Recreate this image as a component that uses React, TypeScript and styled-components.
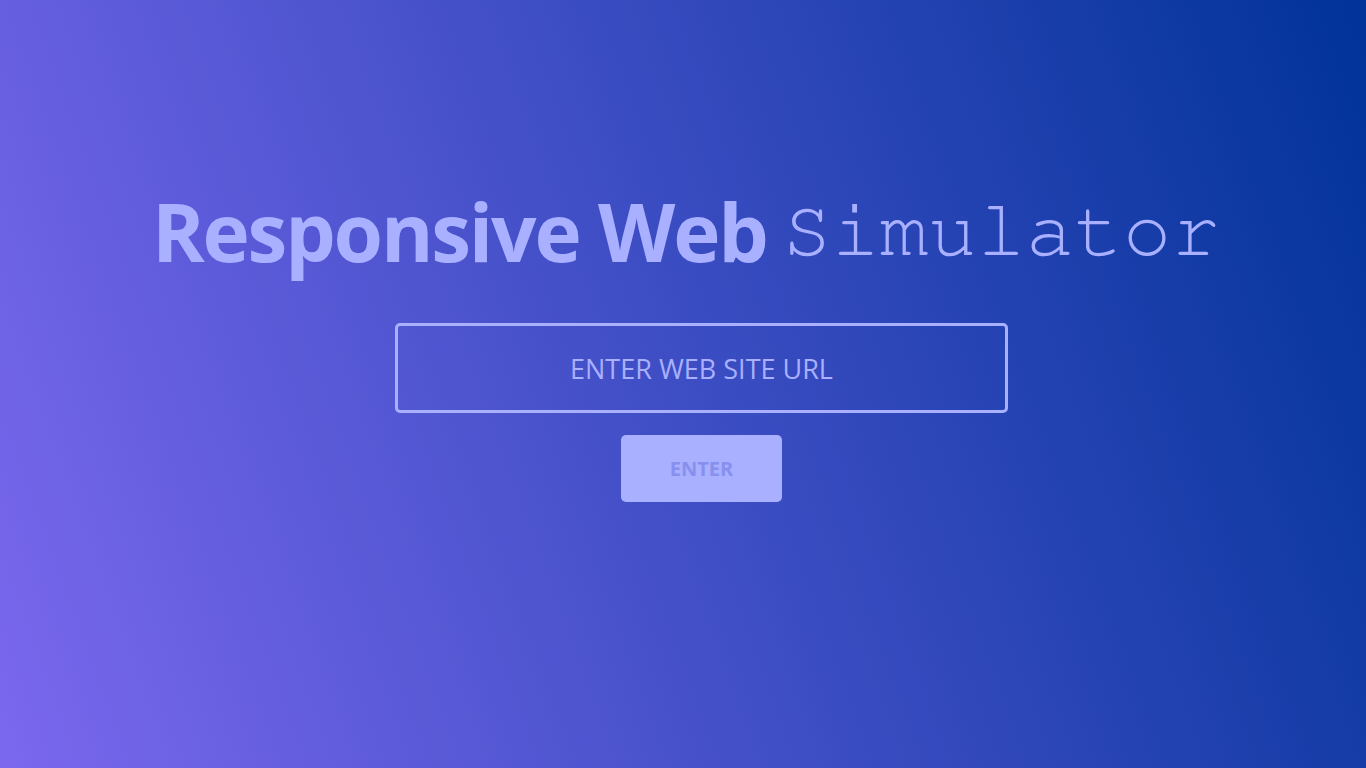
import React, { useState } from "react";
import styled, { createGlobalStyle } from "styled-components";

const GlobalStyle = createGlobalStyle`
  html, body {
    margin: 0;
    padding: 0;
  }
  body {
    font-family: "Open Sans", "Noto Sans", sans-serif;
  }
`;

const Page = styled.div`
  width: 100vw;
  height: 100vh;
  background: linear-gradient(70deg, #7b68ee 0%, #003399 100%);
  display: flex;
  flex-direction: column;
  align-items: center;
  padding-top: 181px;
  box-sizing: border-box;
`;

const Title = styled.h1`
  margin: 0;
  display: flex;
  align-items: center;
  gap: 16px;
  color: #a8b0ff;
  height: 100px;
  padding-left: 6px;
`;

const Bold = styled.span`
  font-family: "Open Sans", "Noto Sans", sans-serif;
  font-size: 80px;
  line-height: 100px;
  font-weight: 700;
  letter-spacing: -2.2px;
`;

const Mono = styled.span`
  font-family: "Nimbus Mono PS", "Nimbus Mono L", "FreeMono", Courier,
    "Courier New", "Liberation Mono", monospace;
  font-size: 81px;
  line-height: 100px;
  font-weight: 400;
`;

const Form = styled.form`
  display: flex;
  flex-direction: column;
  align-items: center;
  gap: 22px;
  margin-top: 42px;
  padding-left: 37px;
`;

const UrlInput = styled.input`
  width: 613px;
  height: 90px;
  box-sizing: border-box;
  border: 3px solid #a8b0ff;
  border-radius: 5px;
  background: transparent;
  color: #a8b0ff;
  text-align: center;
  font-family: "Open Sans", "Noto Sans", sans-serif;
  font-size: 27px;
  outline: none;

  &::placeholder {
    color: #a8b0ff;
    opacity: 1;
  }
`;

const EnterButton = styled.button`
  width: 161px;
  height: 67px;
  border: none;
  border-radius: 5px;
  background: #a8b0ff;
  color: #8790ee;
  font-family: "Open Sans", "Noto Sans", sans-serif;
  font-weight: 700;
  font-size: 20px;
  cursor: pointer;
`;

const App = () => {
  const [url, setUrl] = useState("");

  return (
    <>
      <GlobalStyle />
      <Page>
        <Title>
          <Bold>Responsive Web</Bold>
          <Mono>Simulator</Mono>
        </Title>
        <Form onSubmit={(e) => e.preventDefault()}>
          <UrlInput
            placeholder="ENTER WEB SITE URL"
            value={url}
            onChange={(e) => setUrl(e.target.value)}
          />
          <EnterButton type="submit">ENTER</EnterButton>
        </Form>
      </Page>
    </>
  );
};

export default App;
